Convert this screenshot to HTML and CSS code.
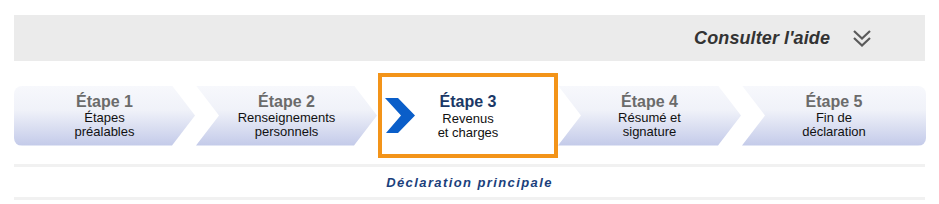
FILE: index.html
```html
<!DOCTYPE html>
<html lang="fr">
<head>
  <meta charset="UTF-8">
  <meta name="viewport" content="width=device-width, initial-scale=1.0">
  <title>Déclaration de revenus</title>
  <link rel="stylesheet" href="styles.css">
</head>
<body>

  <div class="page-wrapper">
    <!-- Help bar -->
    <div class="help-bar">
      <span class="help-text">Consulter l'aide</span>
      <svg class="help-icon" width="20" height="20" viewBox="0 0 20 20">
        <path d="M2 2 L10 9.5 L18 2 M2 9 L10 16.5 L18 9" fill="none" stroke="#5a5a5a" stroke-width="2.2"/>
      </svg>
    </div>

    <!-- Steps -->
    <div class="steps-row">
      <div class="step step-first">
        <div class="step-title">Étape 1</div>
        <div class="step-sub">Étapes<br>préalables</div>
      </div>
      <div class="step">
        <div class="step-title">Étape 2</div>
        <div class="step-sub">Renseignements<br>personnels</div>
      </div>
      <div class="step step-active">
        <svg class="step-arrow" width="31" height="35" viewBox="0 0 31 35">
          <polygon points="0,0 13,0 30,17.5 13,35 1,35 16,17.5" fill="#0a5ec9"/>
        </svg>
        <div class="step-title">Étape 3</div>
        <div class="step-sub">Revenus<br>et charges</div>
      </div>
      <div class="step step-fourth">
        <div class="step-title">Étape 4</div>
        <div class="step-sub">Résumé et<br>signature</div>
      </div>
      <div class="step step-last">
        <div class="step-title">Étape 5</div>
        <div class="step-sub">Fin de<br>déclaration</div>
      </div>
    </div>

    <!-- Section title -->
    <div class="section-title">Déclaration principale</div>
  </div>

</body>
</html>
```

FILE: styles.css
```css
body {
  margin: 0;
  padding: 0;
  background-color: white;
  font-family: "Liberation Sans", Arial, sans-serif;
}
.page-wrapper {
  padding: 15px 14px 0 14px;
}
.help-bar {
  background-color: #ebebeb;
  height: 46px;
  display: flex;
  align-items: center;
  justify-content: flex-end;
  padding-right: 53px;
}
.help-text {
  font-size: 18px;
  font-weight: bold;
  font-style: italic;
  color: #333;
  letter-spacing: 0.1px;
}
.help-icon {
  margin-left: 22px;
  margin-top: 1px;
}
.steps-row {
  display: flex;
  align-items: center;
  margin-top: 12px;
  height: 85px;
}
.step {
  flex: 0 0 181px;
  height: 60px;
  margin-right: 1px;
  display: flex;
  flex-direction: column;
  justify-content: center;
  align-items: center;
  text-align: center;
  background: linear-gradient(#f7f8fc 0%, #f0f2f9 40%, #c3cae9 100%);
  clip-path: polygon(0 0, calc(100% - 23px) 0, 100% 50%, calc(100% - 23px) 100%, 0 100%, 23px 50%);
}
.step-first {
  border-radius: 8px 0 0 8px;
  clip-path: polygon(0 0, calc(100% - 23px) 0, 100% 50%, calc(100% - 23px) 100%, 0 100%);
}
.step-fourth {
  flex-basis: 183px;
}
.step-last {
  flex-basis: 184px;
  margin-right: 0;
  border-radius: 0 8px 8px 0;
  clip-path: polygon(0 0, 100% 0, 100% 100%, 0 100%, 23px 50%);
}
.step-title {
  font-size: 16px;
  font-weight: bold;
  color: #6b6b6b;
  line-height: 19px;
}
.step-sub {
  font-size: 13px;
  color: #111;
  line-height: 14px;
}
.step-active {
  flex-basis: 172px;
  height: 77px;
  margin-right: 0;
  position: relative;
  background: white;
  border: 4px solid #f39419;
  clip-path: none;
}
.step-active .step-title {
  color: #1a3866;
}
.step-active .step-sub {
  margin-top: 1px;
}
.step-arrow {
  position: absolute;
  left: 3px;
  top: 21px;
}
.section-title {
  margin-top: 6px;
  border-top: 3px solid #f1f1f1;
  border-bottom: 3px solid #f1f1f1;
  height: 30px;
  line-height: 31px;
  text-align: center;
  font-size: 13px;
  font-weight: bold;
  font-style: italic;
  letter-spacing: 1.4px;
  color: #1b3f7c;
}
```
